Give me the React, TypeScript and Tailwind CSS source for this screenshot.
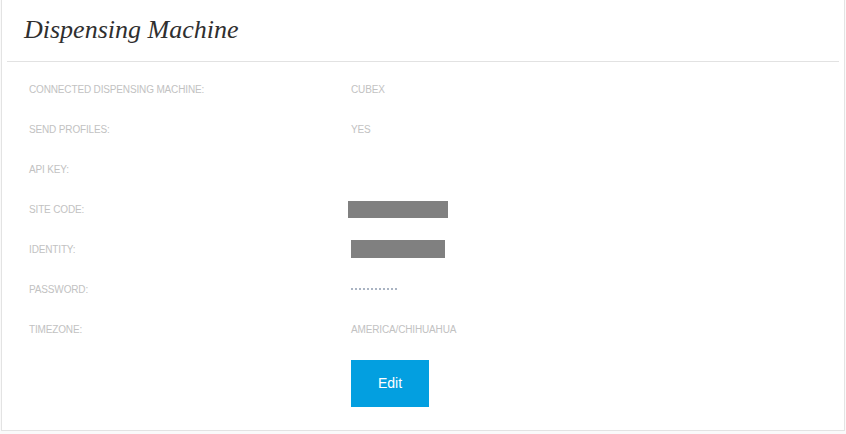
import React from "react";

const rows: { label: string; value?: string; kind?: "text" | "mask" | "password" }[] = [
  { label: "Connected dispensing machine:", value: "CUBEX" },
  { label: "Send profiles:", value: "YES" },
  { label: "API key:" },
  { label: "Site code:", kind: "mask" },
  { label: "Identity:", kind: "mask" },
  { label: "Password:", kind: "password" },
  { label: "Timezone:", value: "America/Chihuahua" },
];

const Value = ({ row, i }: { row: (typeof rows)[number]; i: number }) => {
  if (row.kind === "mask") {
    return i === 3 ? (
      <div className="-ml-[3px] h-[17px] w-[100px] bg-[#808080]" />
    ) : (
      <div className="h-[18px] w-[94px] bg-[#808080]" />
    );
  }
  if (row.kind === "password") {
    return (
      <div className="flex gap-[2px]">
        {Array.from({ length: 12 }).map((_, k) => (
          <span key={k} className="h-[2px] w-[2px] bg-[#aab4c3]" />
        ))}
      </div>
    );
  }
  return <span className="uppercase">{row.value}</span>;
};

export default function App() {
  return (
    <div className="h-[434px] w-[846px] bg-[#fafafa] font-['Liberation_Sans',Arial,sans-serif]">
      <div className="ml-px mr-px h-[431px] border-x border-b border-[#e3e3e3] bg-white">
        <div className="mx-[5px] border-b border-[#e2e2e2] pl-[17px] pt-[14px] pb-[15px]">
          <h1 className="font-['Liberation_Serif','DejaVu_Serif',serif] text-[26px] leading-[32px] italic text-[#2f2f2f]">
            Dispensing Machine
          </h1>
        </div>
        <div className="pl-[27px] pt-[7px]">
          {rows.map((row, i) => (
            <div key={row.label} className="flex h-[40px] items-center text-[10px] tracking-[-0.15px] text-[#c2c2c2]">
              <div className="w-[322px] uppercase">{row.label}</div>
              <Value row={row} i={i} />
            </div>
          ))}
          <div className="pl-[322px] pt-[11px]">
            <button className="h-[47px] w-[78px] bg-[#039fe0] text-[14px] text-white">
              Edit
            </button>
          </div>
        </div>
      </div>
    </div>
  );
}
